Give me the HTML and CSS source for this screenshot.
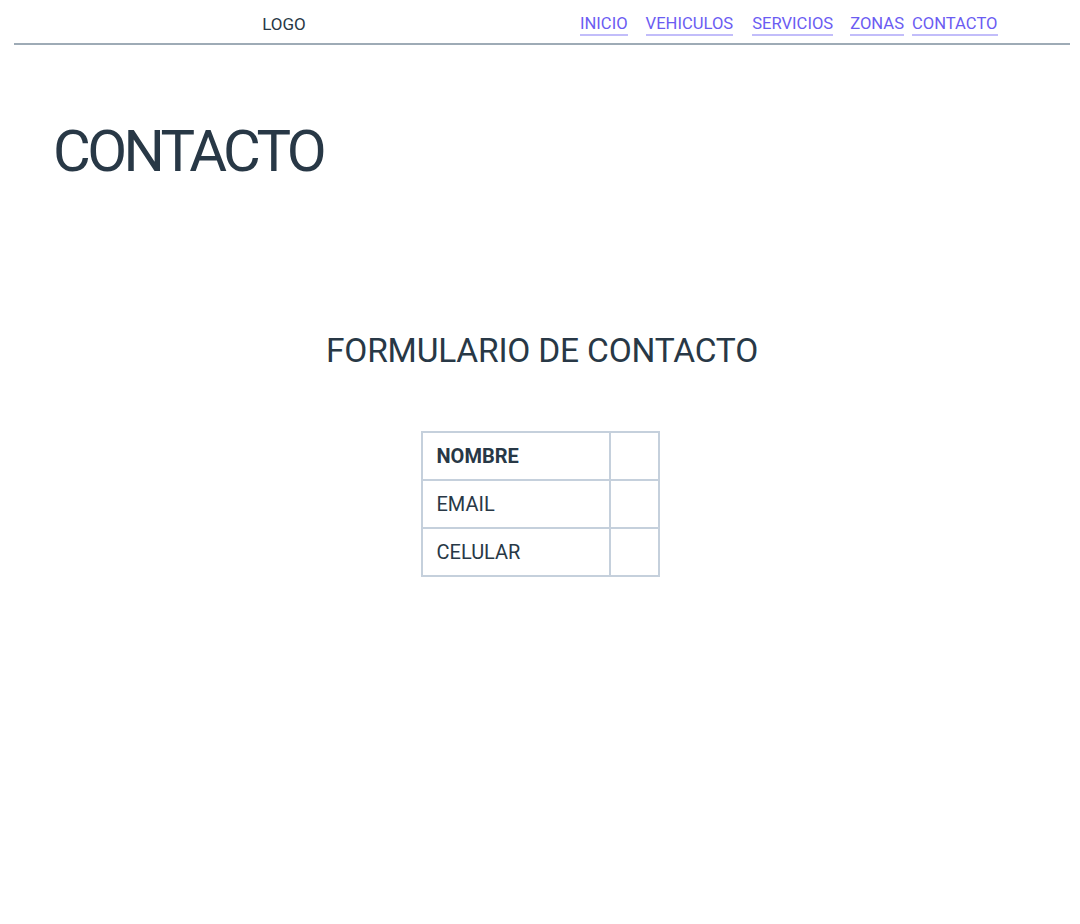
FILE: index.html
```html
<!DOCTYPE html>
<html lang="es">
<head>
<meta charset="utf-8">
<title>Contacto</title>
<link rel="stylesheet" href="styles.css">
</head>
<body>
<header class="site-header">
  <div class="logo">LOGO</div>
  <nav class="nav">
    <a href="#" class="nav-link">INICIO</a>
    <a href="#" class="nav-link">VEHICULOS</a>
    <a href="#" class="nav-link">SERVICIOS</a>
    <a href="#" class="nav-link nav-link--tight">ZONAS</a>
    <a href="#" class="nav-link">CONTACTO</a>
  </nav>
</header>
<main>
  <h1 class="page-title">CONTACTO</h1>
  <section class="form-section">
    <h2 class="form-title">FORMULARIO DE CONTACTO</h2>
    <table class="form-table">
      <tr><th class="label">NOMBRE</th><td class="field"></td></tr>
      <tr><td class="label">EMAIL</td><td class="field"></td></tr>
      <tr><td class="label">CELULAR</td><td class="field"></td></tr>
    </table>
  </section>
</main>
</body>
</html>
```
FILE: styles.css
```css
html, body {
  margin: 0;
  padding: 0;
  background: #ffffff;
}
body {
  font-family: Roboto, "Liberation Sans", sans-serif;
  color: #283846;
  padding: 0 10px 0 14px;
}
.site-header {
  display: grid;
  grid-template-columns: 540px 1fr;
  height: 43px;
  border-bottom: 2px solid #9eabb6;
  align-items: center;
}
.logo {
  text-align: center;
  font-size: 17px;
  padding-top: 5px;
}
.nav {
  display: flex;
  padding-left: 26px;
  padding-top: 6px;
}
.nav-link {
  color: #6b5cf2;
  font-size: 16.6px;
  text-decoration: none;
  border-bottom: 2px solid #c2bdfa;
  line-height: 20px;
  margin-right: 17px;
}
.nav-link:first-child {
  margin-right: 18px;
}
.nav-link:nth-child(2) {
  margin-right: 19px;
}
.nav-link--tight {
  margin-right: 8px;
}
.page-title {
  font-weight: 400;
  font-size: 58px;
  letter-spacing: -3.6px;
  margin: 0;
  padding: 66px 0 0 39px;
  line-height: 80px;
}
.form-section {
  display: flex;
  flex-direction: column;
  align-items: center;
  padding-top: 138px;
}
.form-title {
  font-weight: 400;
  font-size: 33.5px;
  letter-spacing: -0.2px;
  margin: 0 0 58px 0;
  line-height: 44px;
}
.form-table {
  border-collapse: collapse;
  margin-left: -4px;
}
.form-table th, .form-table td {
  border: 2px solid #c5d0dc;
  height: 46px;
  padding: 0 14px;
  text-align: left;
  font-size: 20px;
}
.form-table .label {
  width: 158px;
}
.form-table th.label {
  font-weight: 700;
}
.form-table .field {
  width: 19px;
}
```
